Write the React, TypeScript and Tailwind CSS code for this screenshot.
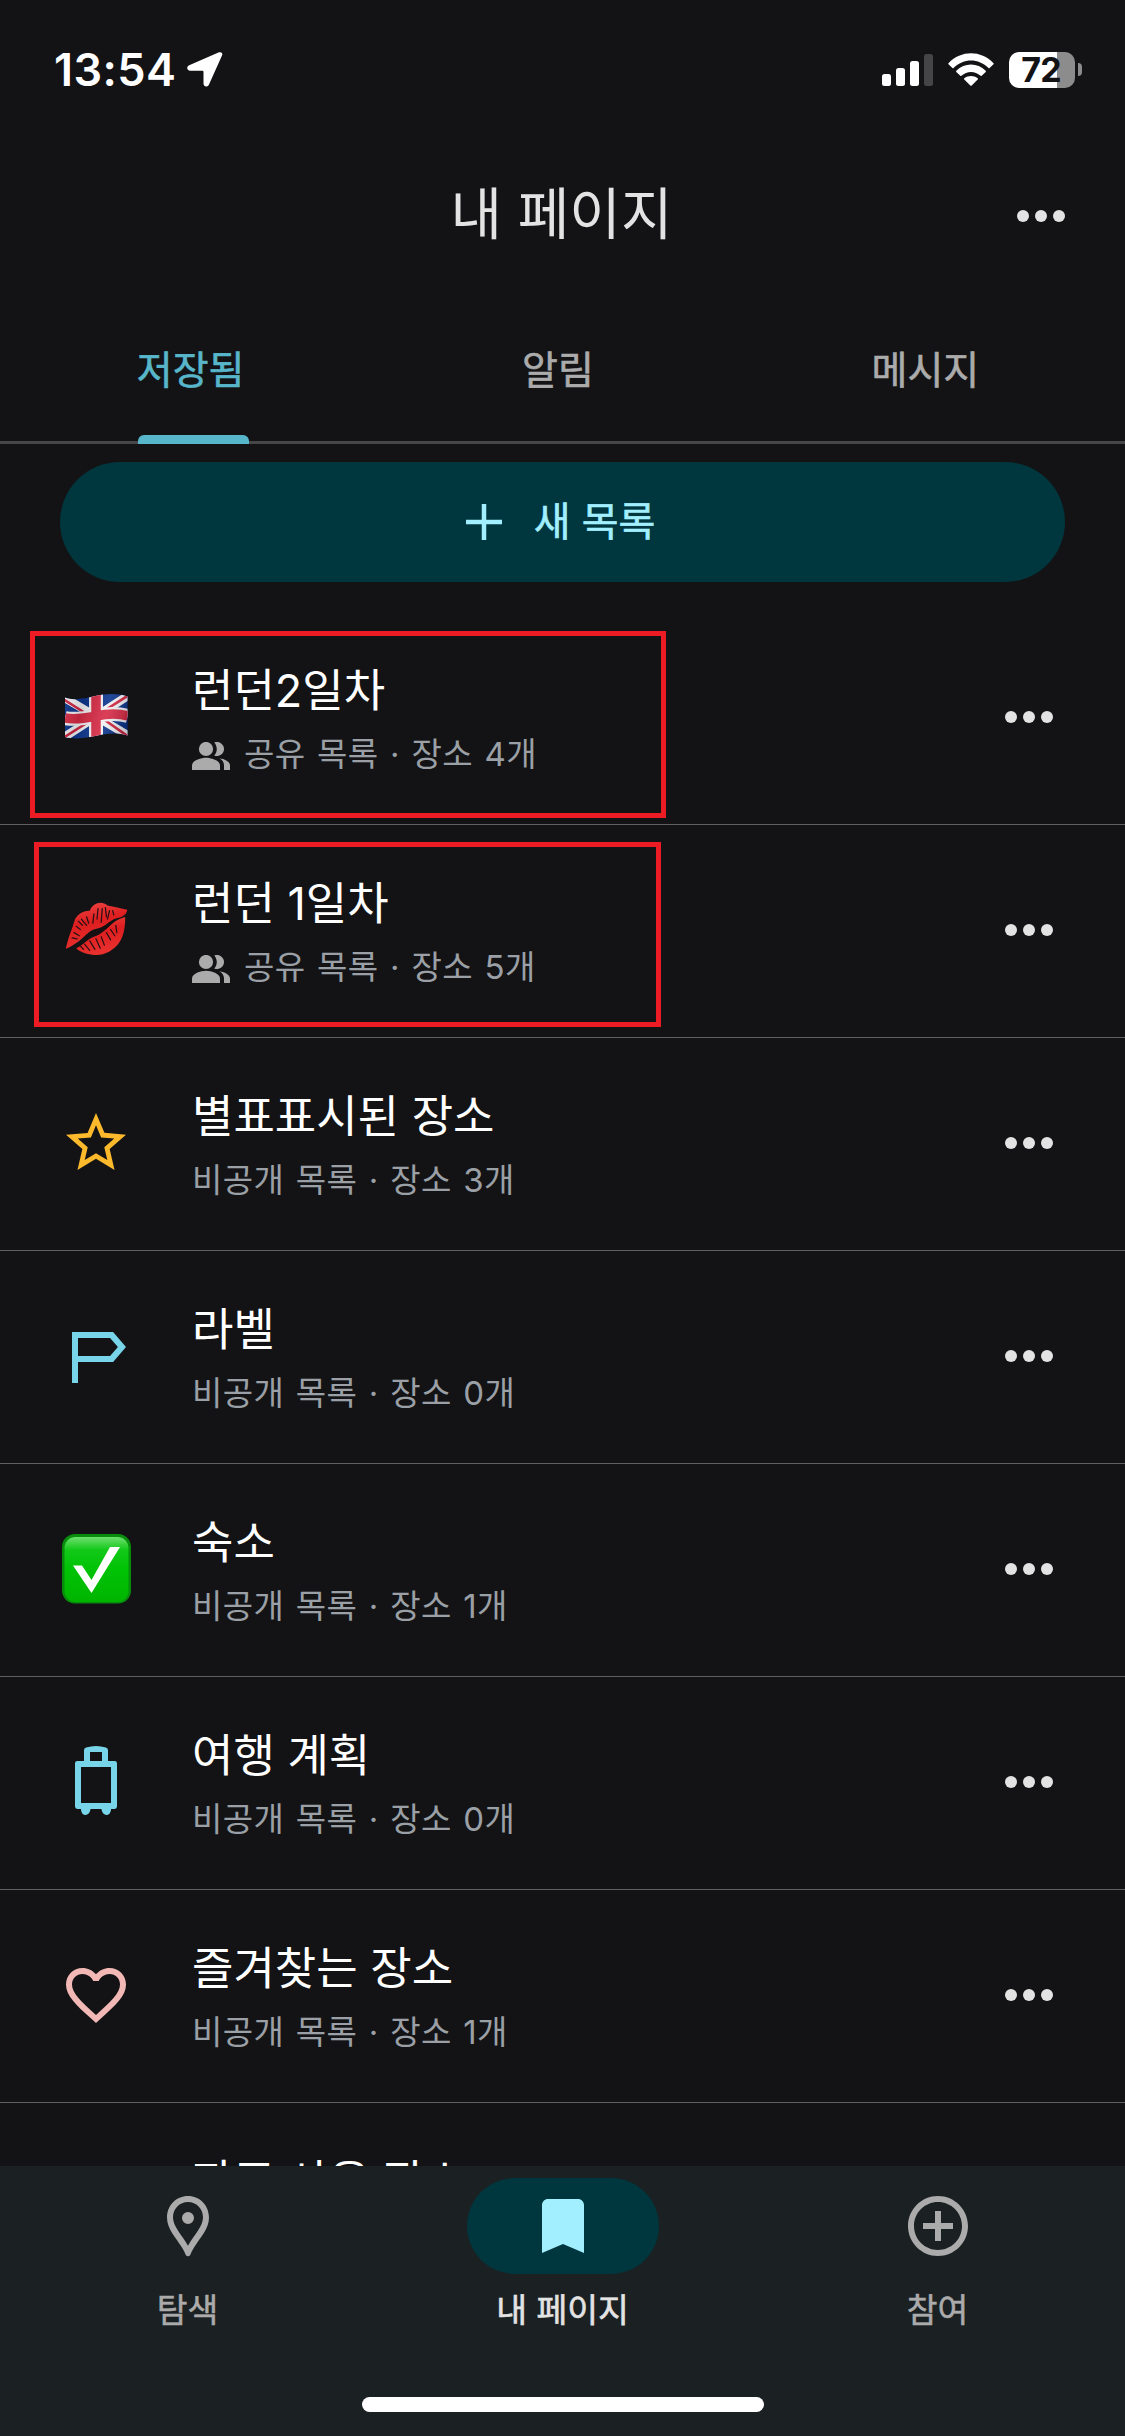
import type { ReactNode } from "react";

type Place = {
  title: string;
  count: number;
  shared?: boolean;
  icon: ReactNode;
  frame?: string;
};

function Dots() {
  return (
    <svg className="h-3 w-12" viewBox="0 0 48 12" fill="#e3e3e3">
      <circle cx="6" cy="6" r="6" />
      <circle cx="24" cy="6" r="6" />
      <circle cx="42" cy="6" r="6" />
    </svg>
  );
}

function Icon({ d, className }: { d: string; className: string }) {
  return (
    <svg className={`size-[72px] ${className}`} viewBox="0 0 24 24" fill="currentColor" fillRule="evenodd">
      <path d={d} />
    </svg>
  );
}

function FlagUK() {
  return (
    <svg className="size-[72px]" viewBox="0 1 72 72">
      <defs>
        <clipPath id="wave">
          <path d="M5 17.5C11 20 19 19.500 31 17C44 14 55 12.500 67.500 16.500V55.500C57 52 46 53.500 35 56C23 58.500 13 59.500 5 57Z" />
        </clipPath>
        <linearGradient id="shade" x1="0" x2="1" y1="0" y2="0.200">
          <stop offset="0" stopColor="#fff" stopOpacity="0.100" />
          <stop offset="0.350" stopColor="#000" stopOpacity="0.120" />
          <stop offset="0.700" stopColor="#fff" stopOpacity="0.100" />
          <stop offset="1" stopColor="#000" stopOpacity="0.180" />
        </linearGradient>
      </defs>
      <g clipPath="url(#wave)">
        <path fill="#0b348c" d="M0 8h72v56H0z" />
        <path stroke="#f1f1f4" strokeWidth="8.500" d="M3 17L69 56M3 58L69 15" />
        <path stroke="#cf2440" strokeWidth="2.600" d="M3 19L33 38M39 36L69 57M3 58L33 39M39 34L69 15" />
        <path fill="none" stroke="#f1f1f4" strokeWidth="14" d="M5 38C14 40 24 38.500 36 36C48 33.500 58 33 68 36M36 10V62" />
        <path fill="none" stroke="#d62a45" strokeWidth="9.500" d="M5 38C14 40 24 38.500 36 36C48 33.500 58 33 68 36M36 10V62" />
        <path fill="url(#shade)" d="M0 8h72v56H0z" />
      </g>
    </svg>
  );
}

function Kiss() {
  return (
    <svg className="size-[72px]" viewBox="1.500 3 69 69">
      <defs>
        <linearGradient id="lip" x1="0" x2="0.300" y1="0" y2="1">
          <stop offset="0" stopColor="#f04a48" />
          <stop offset="0.500" stopColor="#de1d1f" />
          <stop offset="1" stopColor="#e8312f" />
        </linearGradient>
      </defs>
      <path
        fill="url(#lip)"
        d="M7 55.500C9 47 11 41 13 36L16 27C19 21 26 18.500 30 19C33 11 42 9 47 14C53 15 60 17 66 18C65.500 22 62 25 57 26C51 27 48 31 43 34C38 37 33 36 29 40C23 45 17 52 7 55.500Z"
      />
      <path
        fill="url(#lip)"
        d="M17 55C24 52 28 46 34 44C41 42 47 35 52 31C56 28 60 26 64 25C64 34 63 43 58 50C53 57 44 62 35 61.500C28 61 21 59 17 55Z"
      />
      <path
        fill="none"
        stroke="#2a1013"
        strokeLinecap="round"
        strokeWidth="1.200"
        d="M19 29l4 4M17 34l4 3M22 27l5 6M27 25l2 6M34 22l-1 9M38 17l-1 10M42 17l-1 13M45 16l1 9M49 19l-2 8M52 19l1 4M15 40l5 3M13 45l5 1M25 51l5 6M30 48l5 8M36 46l4 9M41 44l3 8M46 40l4 7M50 37l4 6M55 33l1 7M21 53l3 3"
      />
      <path fill="#170f11" d="M23 47C27 41 32 38 38 37C43 34 48 31 53 29C49 34 44 39 38 41C32 43 28 45 23 47Z" />
    </svg>
  );
}

function CheckMark() {
  return (
    <svg className="size-[72px]" viewBox="0 0 72 72">
      <defs>
        <linearGradient id="green" x1="0" x2="0" y1="0" y2="1">
          <stop offset="0" stopColor="#6fe070" />
          <stop offset="0.200" stopColor="#12c818" />
          <stop offset="0.500" stopColor="#00c305" />
          <stop offset="1" stopColor="#00b400" />
        </linearGradient>
      </defs>
      <rect x="2" y="1" width="69" height="69.500" rx="13" fill="#078d0b" />
      <rect x="4.500" y="4" width="64" height="65" rx="11" fill="url(#green)" />
      <path fill="#fff" d="M13 32.500H22L31.500 47L50 14H60L31.500 60Z" />
    </svg>
  );
}

function People() {
  return (
    <svg className="mt-[3px] h-7 w-[38px] shrink-0" viewBox="0 0 38 28" fill="#ababab">
      <circle cx="14" cy="7" r="7.100" />
      <path d="M0 28V23.500C0 18.500 8.500 15.700 14 15.700S28 18.500 28 23.500V28Z" />
      <path d="M22.300.4A7.100 7.100 0 1 1 22.300 13.600C25.600 9.600 25.600 4.400 22.300.4ZM27.500 16.200C33.500 17.200 38 19.800 38 23.500V28H32V23.500C32 20.500 30.500 18 27.500 16.200Z" />
    </svg>
  );
}

const places: Place[] = [
  { title: "런던2일차", count: 4, shared: true, icon: <FlagUK />, frame: "left-[30px] top-[19px] h-[187px] w-[636px]" },
  { title: "런던 1일차", count: 5, shared: true, icon: <Kiss />, frame: "left-[34px] top-[17px] h-[185px] w-[627px]" },
  {
    title: "별표표시된 장소",
    count: 3,
    icon: (
      <Icon
        className="text-[#fdb92c]"
        d="M22 9.240l-7.190-.62L12 2 9.190 8.630 2 9.240l5.460 4.730L5.820 21 12 17.270 18.180 21l-1.630-7.030L22 9.240zM12 15.400l-3.760 2.270 1-4.280-3.320-2.880 4.380-.38L12 6.100l1.710 4.040 4.380.38-3.320 2.880 1 4.280L12 15.400z"
      />
    ),
  },
  {
    title: "라벨",
    count: 0,
    icon: <Icon className="text-[#78d5e9]" d="M4 4H17.700L22 9L17.700 14H6V21H4ZM6 6V12H16.700L19.300 9L16.700 6Z" />,
  },
  { title: "숙소", count: 1, icon: <CheckMark /> },
  {
    title: "여행 계획",
    count: 0,
    icon: (
      <Icon
        className="text-[#78d5e9]"
        d="M8 5V1.400Q8 .7 8.700 .5Q12-.5 15.300 .5Q16 .7 16 1.400V5H18.200Q19 5 19 5.800V20.200Q19 21 18.200 21H17C17 22.300 16.300 23 15.500 23S14 22.300 13.800 21H10.200C10 22.300 9.300 23 8.500 23S7 22.300 7 21H5.800Q5 21 5 20.200V5.800Q5 5 5.800 5ZM10 2V5H14V2ZM7 7V19H17V7Z"
      />
    ),
  },
  {
    title: "즐겨찾는 장소",
    count: 1,
    icon: (
      <Icon
        className="text-[#f2b8b5]"
        d="M16.500 3c-1.740 0-3.410.81-4.500 2.090C10.910 3.810 9.240 3 7.500 3 4.420 3 2 5.420 2 8.500c0 3.780 3.400 6.860 8.550 11.540L12 21.350l1.450-1.320C18.600 15.360 22 12.280 22 8.500 22 5.420 19.580 3 16.500 3zm-4.400 15.550l-.1.100-.1-.1C7.140 14.240 4 11.390 4 8.500 4 6.500 5.500 5 7.500 5c1.540 0 3.040.99 3.570 2.360h1.870C13.460 5.990 14.960 5 16.500 5c2 0 3.500 1.500 3.500 3.500 0 2.890-3.140 5.740-7.900 10.050z"
      />
    ),
  },
];

function Row({ place }: { place: Place }) {
  return (
    <li className="relative flex h-[213px] items-start border-b border-[#5f6062] pl-[60px] pr-[72px]">
      <div className="mt-[69px] shrink-0">{place.icon}</div>
      <div className="ml-[60px] flex-1 pt-[46px]">
        <p className="text-[45px] leading-[66px] text-white">{place.title}</p>
        <div className="mt-1.5 flex items-center gap-[14px] text-[33px] leading-[48px] text-[#9aa0a6]">
          {place.shared && <People />}
          <p className="whitespace-pre tracking-[0.4px] [word-spacing:1.8px]">
            {place.shared ? "공유" : "비공개"} 목록 · 장소 {place.count}개
          </p>
        </div>
      </div>
      <button className="mt-[99px] flex">
        <Dots />
      </button>
      {place.frame && <div className={`absolute border-[5px] border-[#ed1c24] ${place.frame}`} />}
    </li>
  );
}

function StatusBar() {
  return (
    <div className="flex h-[132px] shrink-0 items-center justify-between pl-[54px] pr-[43px] pt-[7px]">
      <div className="flex items-center gap-[11px]">
        <span className="text-[45px] font-semibold leading-[54px] tracking-[0.4px] text-white">13:54</span>
        <svg className="h-[35px] w-[36px]" viewBox="0 0 36 35" fill="#fff">
          <path d="M32 .3C34.500-.4 36 1.300 35 3.600L22 32.500C20.500 35.700 16.500 35 16.500 31.500V19.800Q16.500 18.700 15.400 18.700H3.300C-.2 18.700-.9 14.700 2.200 13.300Z" />
        </svg>
      </div>
      <div className="flex items-center">
        <svg className="h-8 w-[51px]" viewBox="0 0 51 32" fill="#fff">
          <rect x="0" y="20" width="9" height="12" rx="2.500" />
          <rect x="14" y="14" width="9" height="18" rx="2.500" />
          <rect x="28" y="7" width="9" height="25" rx="2.500" />
          <rect x="42" y="0" width="9" height="32" rx="2.500" fill="#454547" />
        </svg>
        <svg className="ml-[15px] h-[33px] w-[46px]" viewBox="0 0 46 33" fill="#fff">
          <path d="M.5 10.200C13-3 33-3 45.500 10.200Q46 10.800 45.500 11.300L41.600 15Q41 15.500 40.500 15C30.500 5 15.500 5 5.500 15Q5 15.500 4.400 15L.5 11.300Q0 10.800.5 10.200Z" />
          <path d="M8.300 17.800C16.500 9.500 29.500 9.500 37.700 17.800Q38.200 18.400 37.700 19L33.700 22.800Q33.200 23.300 32.600 22.800C27 17.700 19 17.700 13.400 22.800Q12.800 23.300 12.300 22.800L8.300 19Q7.800 18.400 8.300 17.800Z" />
          <path d="M16.300 25.300C20.200 22.200 25.800 22.200 29.700 25.300Q30.300 25.900 29.700 26.500L23.700 32.500Q23 33.100 22.300 32.500L16.300 26.500Q15.700 25.900 16.300 25.300Z" />
        </svg>
        <div className="ml-[15px] flex h-9 w-[66px] items-center justify-center rounded-[10px] bg-[linear-gradient(90deg,#fff_48px,#8c8c8d_48px)]">
          <span className="pr-[2px] text-[34px] font-bold leading-9 tracking-[-0.8px] text-[#131315]">72</span>
        </div>
        <div className="ml-[3px] h-[13px] w-1 rounded-r-full bg-[#8c8c8d]" />
      </div>
    </div>
  );
}

export default function App() {
  return (
    <div className="flex h-[2436px] w-[1125px] flex-col overflow-hidden bg-[#131315] font-['Inter','Noto_Sans_CJK_KR',sans-serif]">
      <StatusBar />
      <header className="grid h-[164px] shrink-0 grid-cols-[1fr_auto_1fr] items-center px-[60px]">
        <span />
        <h1 className="pr-[2px] text-[56px] leading-[80px] text-[#e3e3e3]">내 페이지</h1>
        <button className="mt-1 justify-self-end">
          <Dots />
        </button>
      </header>

      <nav className="grid h-[148px] shrink-0 grid-cols-3 border-b-[3px] border-[#464648] pl-[7px] pr-[16px] text-[39px] leading-[56px] text-[#ababab] [-webkit-text-stroke:0.6px_currentColor]">
        <div className="relative flex justify-center pt-[46px] text-[#58b6ca]">
          저장됨
          <span className="absolute -bottom-[3px] left-[131px] h-[9px] w-[111px] rounded-t-[6px] bg-[#58b6ca]" />
        </div>
        <div className="flex justify-center pt-[46px]">알림</div>
        <div className="flex justify-center pt-[46px]">메시지</div>
      </nav>

      <button className="mx-[60px] mb-[30px] mt-[18px] flex h-[120px] shrink-0 items-center justify-center gap-8 rounded-full bg-[#00363d] pr-1 text-[40px] leading-[56px] text-[#a1efff]">
        <svg className="size-9" viewBox="0 0 36 36" stroke="currentColor" strokeWidth="4.500">
          <path d="M18 0V36M0 18H36" />
        </svg>
        <span className="[-webkit-text-stroke:0.6px_currentColor]">새 목록</span>
      </button>

      <ul className="min-h-0 flex-1 overflow-hidden">
        {places.map((place) => (
          <Row key={place.title} place={place} />
        ))}
        <li className="pl-[192px] pt-[46px] text-[45px] leading-[66px] text-white">자주 사용 장소</li>
      </ul>

      <footer className="flex h-[270px] shrink-0 flex-col items-center bg-[#1b2123]">
        <div className="grid w-full grid-cols-3 pt-3 text-[33.5px] leading-[48px] text-[#ababab]">
          <div className="flex flex-col items-center gap-[12px]">
            <span className="flex h-24 items-center">
              <Icon
                className="text-[#ababab]"
                d="M12 2C8.100 2 5 5.100 5 9.200C5 13 8 16 10 19.200C10.600 20.200 11 21 11.200 21.600Q12 22.600 12.800 21.600C13 21 13.400 20.200 14 19.200C16 16 19 13 19 9.200C19 5.100 15.900 2 12 2ZM12 4C14.800 4 17 6.200 17 9.200C17 12.200 14 15 12 18.600C10 15 7 12.200 7 9.200C7 6.200 9.200 4 12 4ZM12 7.300A2 2 0 1 0 12 11.300A2 2 0 1 0 12 7.300Z"
              />
            </span>
            <span className="[-webkit-text-stroke:0.5px_currentColor]">탐색</span>
          </div>
          <div className="flex flex-col items-center gap-[12px] text-[#e3e3e3]">
            <span className="flex h-24 w-48 items-center justify-center rounded-full bg-[#00363d]">
              <Icon className="text-[#a1efff]" d="M17 3H7c-1.100 0-2 .9-2 2v16l7-3 7 3V5c0-1.100-.9-2-2-2z" />
            </span>
            <span className="[-webkit-text-stroke:0.6px_currentColor]">내 페이지</span>
          </div>
          <div className="flex flex-col items-center gap-[12px]">
            <span className="flex h-24 items-center">
              <Icon
                className="text-[#ababab]"
                d="M13 7h-2v4H7v2h4v4h2v-4h4v-2h-4V7zm-1-5C6.480 2 2 6.480 2 12s4.480 10 10 10 10-4.480 10-10S17.520 2 12 2zm0 18c-4.410 0-8-3.590-8-8s3.590-8 8-8 8 3.590 8 8-3.590 8-8 8z"
              />
            </span>
            <span className="[-webkit-text-stroke:0.5px_currentColor]">참여</span>
          </div>
        </div>
        <div className="mt-[63px] h-[15px] w-[402px] rounded-full bg-white" />
      </footer>
    </div>
  );
}
